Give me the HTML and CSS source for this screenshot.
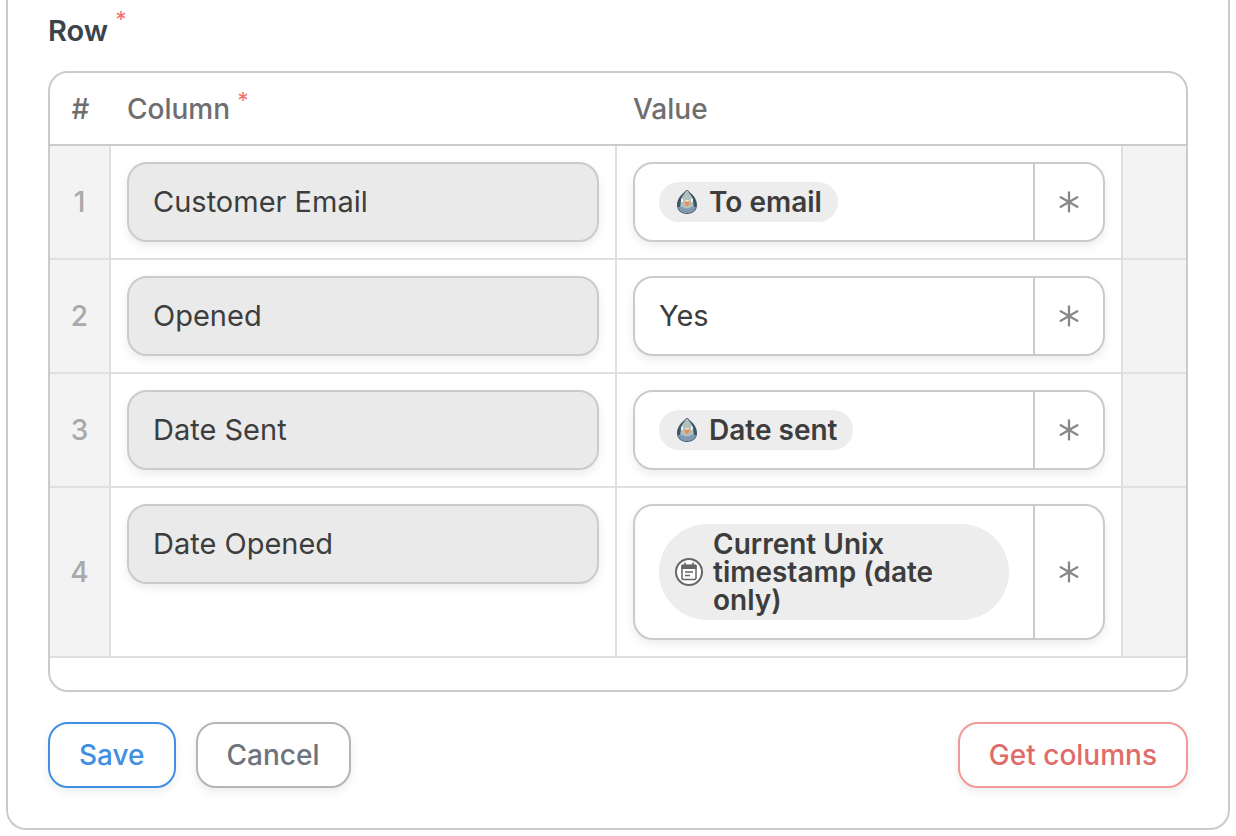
FILE: index.html
```html
<!DOCTYPE html>
<html lang="en">
    <head>
        <meta charset="utf-8">
        <title>Row</title>
        <link rel="stylesheet" href="styles.css">
    </head>

    <body>
        <!-- shared icons -->
        <svg class="iconDefs" aria-hidden="true">
            <symbol id="star" viewBox="0 0 20 22">
                <path d="M10 1.500v19M1.700 6.200l16.600 9.600M18.300 6.200L1.700 15.800" fill="none" stroke="currentColor" stroke-width="2.300" stroke-linecap="round"/>
            </symbol>
            <symbol id="bird" viewBox="0 0 24 28">
                <path d="M12 2c-1.500 0-2 1.500-3 2.500C5 7.500 2 12 2 17c0 5.500 4 9 10 9s10-3.500 10-9c0-5-3-9.500-7-12.500C14 3.500 13.500 2 12 2z" fill="#3f5668"/>
                <path d="M12 2.800c-1.200 0-1.400 1.400-2.400 2.600C7.500 7.500 6 10.500 5.800 14L5 21h14l-.8-7c-.2-3.500-1.700-6.500-3.800-8.600-1-1.200-1.200-2.600-2.400-2.600z" fill="#b1c1bb"/>
                <path d="M3 19h5l1.500 1.200h5L16 19h5c-.8 4-4 6-9 6s-8.200-2-9-6z" fill="#8199b0"/>
                <path d="M6.300 10.500h1.700v3.500H6.300zM16 10.500h1.700v3.500H16z" fill="#fff"/>
                <path d="M10.300 12h3.400v2h-3.400z" fill="#e7ece8"/>
                <path d="M9.700 13.500h4.600V16L12 18.500 9.700 16z" fill="#ef8b50"/>
            </symbol>
            <symbol id="calendar" viewBox="0 0 28 28">
                <circle cx="14" cy="14" r="13" fill="#fff" stroke="#666" stroke-width="2"/>
                <rect x="7" y="7.500" width="14" height="14" rx="1.500" fill="none" stroke="#666" stroke-width="1.500"/>
                <path d="M6.300 7.500q0-1 1-1h13.400q1 0 1 1V11H6.300z" fill="#666"/>
                <path d="M10 4.500v3M18 4.500v3M10 14h8M10 17.500h5" fill="none" stroke="#666" stroke-width="1.500"/>
            </symbol>
        </svg>

        <form class="panel">
            <h2 class="rowTitle">Row <span class="required">*</span></h2>
            <div class="tableContainer">
                <table class="rowTable">
                    <thead>
                        <tr>
                            <th class="numberCell">#</th>
                            <th>Column <span class="required">*</span></th>
                            <th>Value</th>
                            <th class="endCell"></th>
                        </tr>
                    </thead>
                    <tbody>
                        <tr>
                            <td class="numberCell">1</td>
                            <td><input class="columnInput" type="text" aria-label="Column 1" value="Customer Email" readonly></td>
                            <td>
                                <div class="valueField">
                                    <div class="valueContent">
                                        <span class="pill"><svg class="birdIcon"><use href="#bird"/></svg>To email</span>
                                    </div>
                                    <button type="button" class="starButton" aria-label="Pick value 1"><svg class="starIcon"><use href="#star"/></svg></button>
                                </div>
                            </td>
                            <td class="endCell"></td>
                        </tr>
                        <tr>
                            <td class="numberCell">2</td>
                            <td><input class="columnInput" type="text" aria-label="Column 2" value="Opened" readonly></td>
                            <td>
                                <div class="valueField">
                                    <div class="valueContent">
                                        <input class="valueInput" type="text" aria-label="Value 2" value="Yes">
                                    </div>
                                    <button type="button" class="starButton" aria-label="Pick value 2"><svg class="starIcon"><use href="#star"/></svg></button>
                                </div>
                            </td>
                            <td class="endCell"></td>
                        </tr>
                        <tr>
                            <td class="numberCell">3</td>
                            <td><input class="columnInput" type="text" aria-label="Column 3" value="Date Sent" readonly></td>
                            <td>
                                <div class="valueField">
                                    <div class="valueContent">
                                        <span class="pill"><svg class="birdIcon"><use href="#bird"/></svg>Date sent</span>
                                    </div>
                                    <button type="button" class="starButton" aria-label="Pick value 3"><svg class="starIcon"><use href="#star"/></svg></button>
                                </div>
                            </td>
                            <td class="endCell"></td>
                        </tr>
                        <tr>
                            <td class="numberCell">4</td>
                            <td><input class="columnInput" type="text" aria-label="Column 4" value="Date Opened" readonly></td>
                            <td>
                                <div class="valueField">
                                    <div class="valueContent">
                                        <span class="pill"><svg class="calendarIcon"><use href="#calendar"/></svg>Current Unix timestamp (date only)</span>
                                    </div>
                                    <button type="button" class="starButton" aria-label="Pick value 4"><svg class="starIcon"><use href="#star"/></svg></button>
                                </div>
                            </td>
                            <td class="endCell"></td>
                        </tr>
                    </tbody>
                </table>
            </div>
            <div class="buttonRow">
                <button type="button" class="button save">Save</button>
                <button type="button" class="button cancel">Cancel</button>
                <button type="button" class="button getColumns">Get columns</button>
            </div>
        </form>
    </body>
</html>
```

FILE: styles.css
```css
* {
    box-sizing: border-box;
}
body {
    margin: 0 6px;
    background-color: white;
    font-family: Inter, "Liberation Sans", sans-serif;
    font-size: 28px;
    color: #3d3d3d;
}
input, button {
    font: inherit;
    color: inherit;
}
.iconDefs {
    display: none;
}
.panel {
    border: 2px solid #cbcbcb;
    border-top: 0;
    border-radius: 0 0 20px 20px;
    padding: 11px 40px 40px;
}
.rowTitle {
    margin: 0 0 20px;
    font-size: 29px;
    font-weight: 600;
    line-height: 40px;
    color: #3b434b;
}
.required {
    font-size: 22px;
    font-weight: 400;
    line-height: 16px;
    vertical-align: top;
    color: #f0706c;
}

/* table */
.tableContainer {
    border: 2px solid #cbcbcb;
    border-radius: 20px;
    padding-bottom: 32px;
    overflow: hidden;
}
.rowTable {
    width: 100%;
    table-layout: fixed;
    border-collapse: separate;
    border-spacing: 0;
}
th {
    height: 73px;
    padding: 0 16px;
    border-bottom: 2px solid #cbcbcb;
    font-weight: 500;
    line-height: 34px;
    text-align: left;
    color: #6e6e6e;
}
td {
    padding: 16px;
    border-right: 2px solid #e0e0e0;
    border-bottom: 2px solid #e0e0e0;
    vertical-align: top;
}
.numberCell {
    width: 61px;
    padding: 0;
    text-align: center;
    vertical-align: middle;
}
td.numberCell {
    background-color: #f3f3f3;
    font-weight: 500;
    color: #a9a9a9;
}
.endCell {
    width: 63px;
    padding: 0;
}
td.endCell {
    background-color: #f3f3f3;
    border-right: 0;
}

/* fields */
.columnInput {
    display: block;
    width: 100%;
    height: 80px;
    padding: 0 24px 2px;
    border: 2px solid #cbcbcb;
    border-radius: 20px;
    background-color: #eaeaea;
    font-size: 29px;
    box-shadow: 0 4px 10px rgba(0, 0, 0, 0.08);
}
.valueField {
    display: flex;
    min-height: 80px;
    border: 2px solid #cbcbcb;
    border-radius: 20px;
    background-color: white;
    box-shadow: 0 4px 10px rgba(0, 0, 0, 0.08);
}
.valueContent {
    flex: 1;
    display: flex;
    align-items: center;
    min-width: 0;
    padding: 18px 24px;
}
.valueInput {
    width: 100%;
    padding: 0 0 2px;
    border: 0;
    background-color: transparent;
    font-size: 29px;
}
.pill {
    display: flex;
    align-items: center;
    gap: 10px;
    padding: 6px 16px;
    border-radius: 48px;
    background-color: #ededed;
    font-weight: 600;
    line-height: 28px;
}
.birdIcon {
    flex: none;
    width: 24px;
    height: 28px;
}
.calendarIcon {
    flex: none;
    width: 28px;
    height: 28px;
}
.starButton {
    display: flex;
    align-items: center;
    justify-content: center;
    width: 70px;
    padding: 0;
    border: 0;
    border-left: 2px solid #cbcbcb;
    background-color: transparent;
    color: #888;
}
.starIcon {
    width: 20px;
    height: 22px;
}

/* buttons */
.buttonRow {
    display: flex;
    gap: 20px;
    margin-top: 30px;
}
.button {
    height: 66px;
    padding: 0 29px;
    border: 2px solid;
    border-radius: 20px;
    background-color: white;
    font-weight: 500;
    box-shadow: 0 4px 10px rgba(0, 0, 0, 0.08);
}
.save {
    border-color: #3f8fe3;
    color: #3f8fe3;
}
.cancel {
    border-color: #b5b5b5;
    color: #6d747c;
}
.getColumns {
    margin-left: auto;
    border-color: #f29896;
    color: #e06c69;
}
```
